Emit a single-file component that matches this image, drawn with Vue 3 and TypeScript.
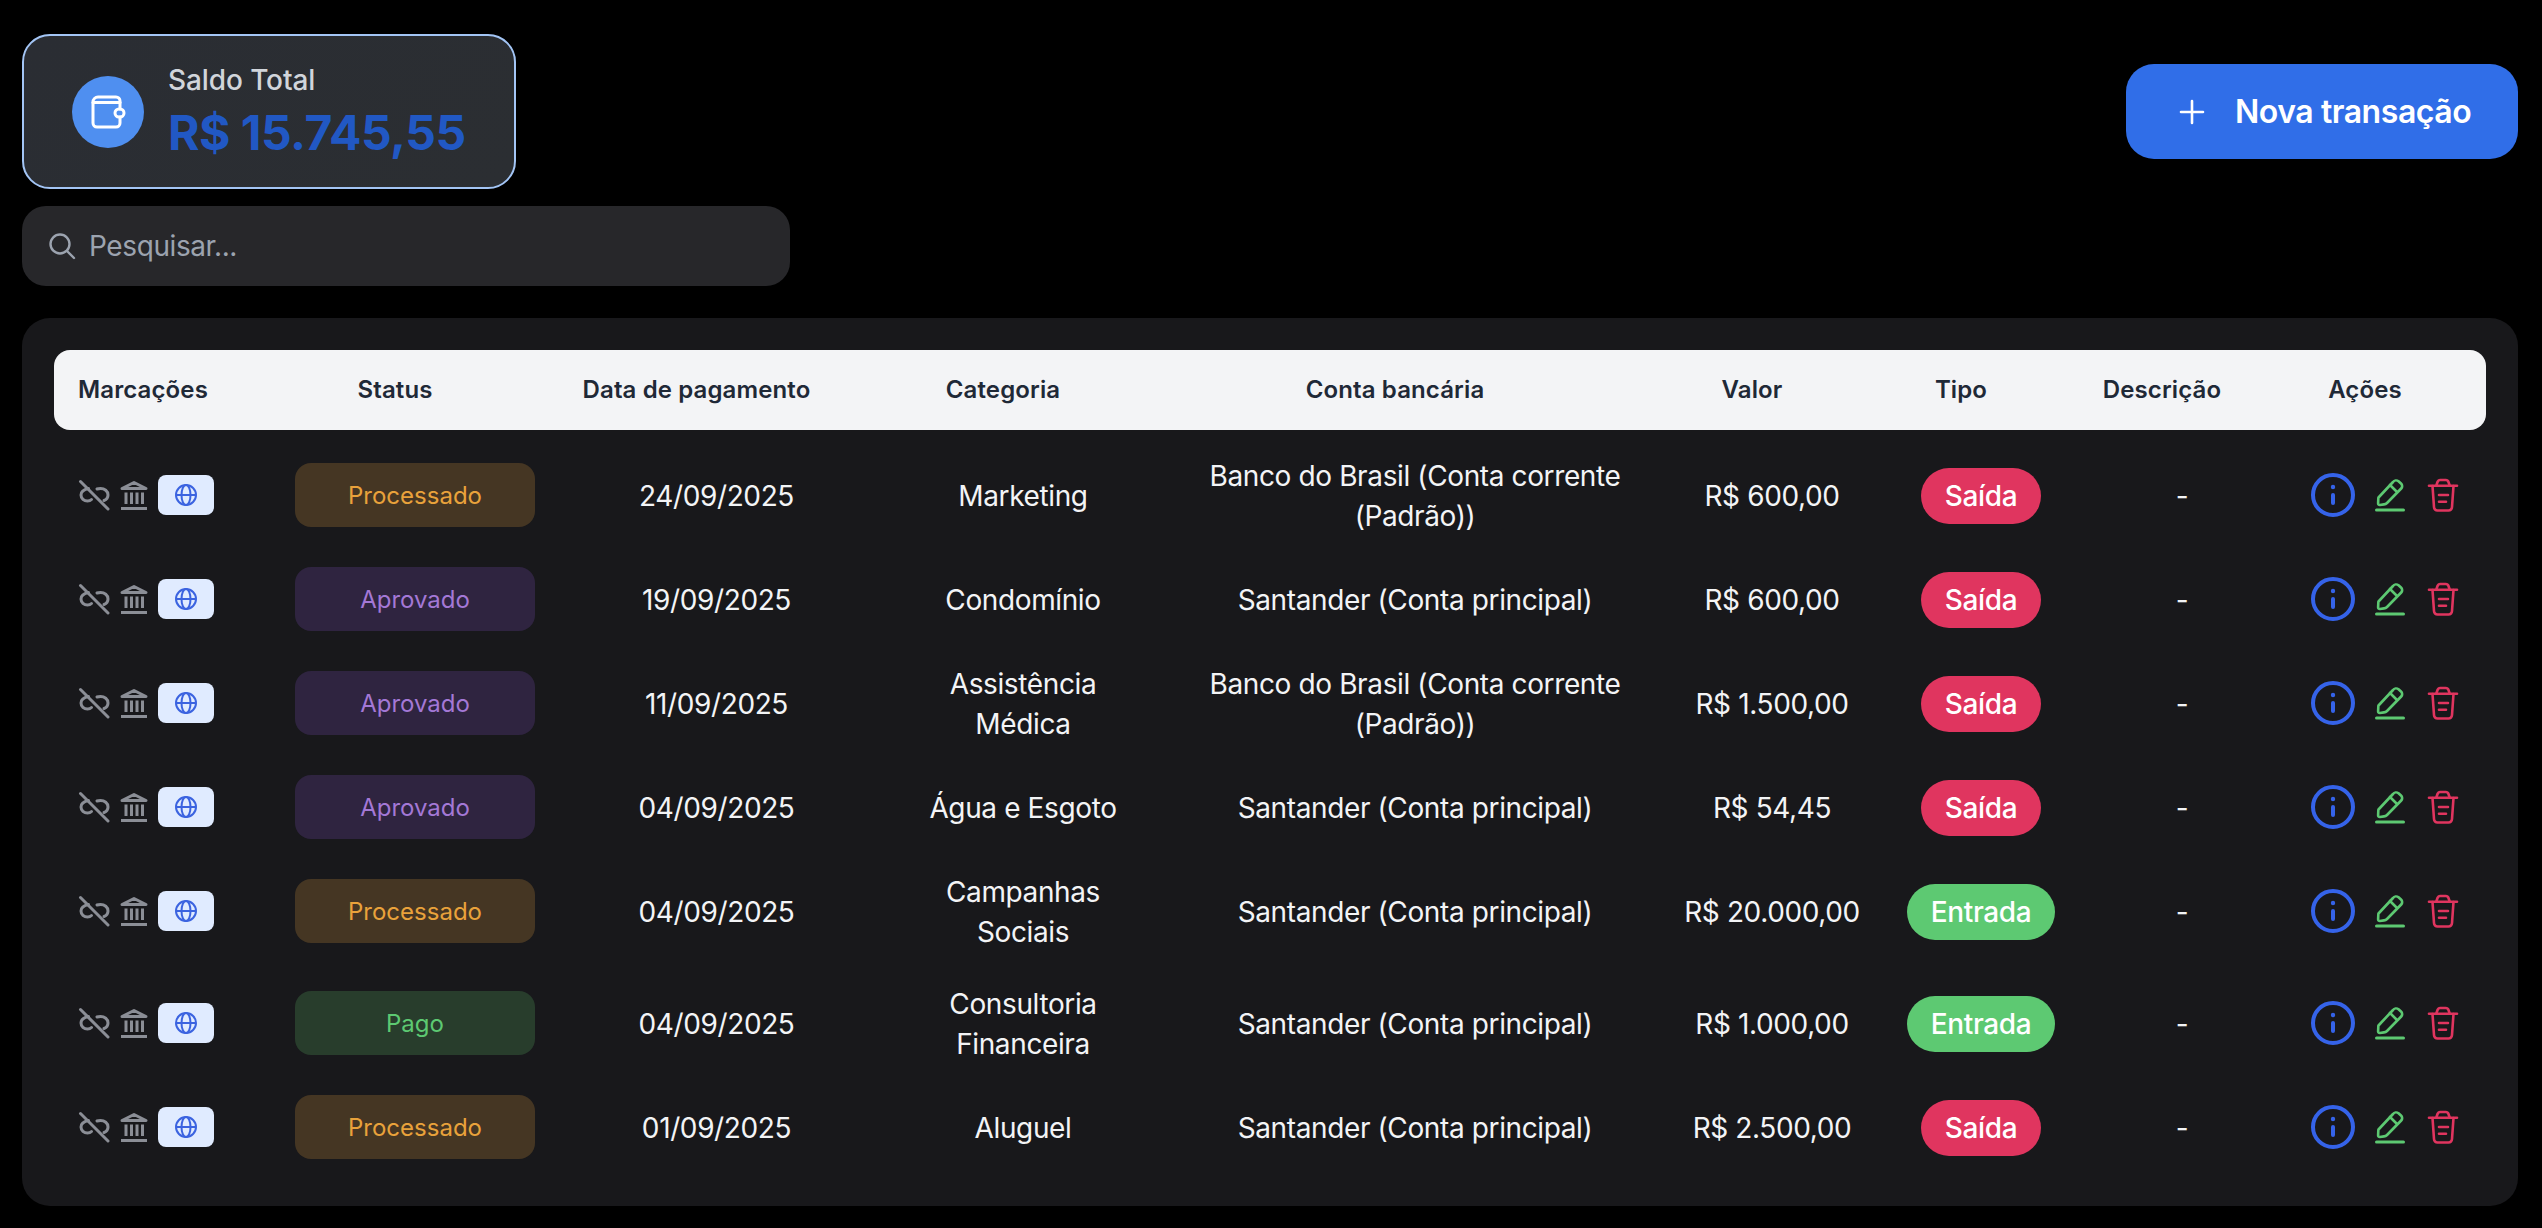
<script setup lang="ts">
interface Transaction {
  status: string
  date: string
  category: string
  account: string
  value: string
  type: string
}

const columns = ['Marcações', 'Status', 'Data de pagamento', 'Categoria', 'Conta bancária', 'Valor', 'Tipo', 'Descrição', 'Ações']
const widths = [221, 280, 323, 290, 494, 220, 198, 204, 202]

const bb = 'Banco do Brasil (Conta corrente (Padrão))'
const santander = 'Santander (Conta principal)'

const transactions: Transaction[] = [
  { status: 'Processado', date: '24/09/2025', category: 'Marketing', account: bb, value: 'R$ 600,00', type: 'Saída' },
  { status: 'Aprovado', date: '19/09/2025', category: 'Condomínio', account: santander, value: 'R$ 600,00', type: 'Saída' },
  { status: 'Aprovado', date: '11/09/2025', category: 'Assistência Médica', account: bb, value: 'R$ 1.500,00', type: 'Saída' },
  { status: 'Aprovado', date: '04/09/2025', category: 'Água e Esgoto', account: santander, value: 'R$ 54,45', type: 'Saída' },
  { status: 'Processado', date: '04/09/2025', category: 'Campanhas Sociais', account: santander, value: 'R$ 20.000,00', type: 'Entrada' },
  { status: 'Pago', date: '04/09/2025', category: 'Consultoria Financeira', account: santander, value: 'R$ 1.000,00', type: 'Entrada' },
  { status: 'Processado', date: '01/09/2025', category: 'Aluguel', account: santander, value: 'R$ 2.500,00', type: 'Saída' },
]

function statusClass(status: string) {
  return 'status-' + status.toLowerCase()
}
</script>

<template>
  <div class="page">
    <div class="top">
      <div class="balance">
        <div class="balance-icon">
          <svg width="36" height="36" viewBox="0 0 36 36" fill="none" stroke="#fff" stroke-width="3" stroke-linejoin="round" stroke-linecap="round">
            <path d="M30 15V7a4 4 0 0 0-4-4H8a5 5 0 0 0-5 5v21a4 4 0 0 0 4 4h19a4 4 0 0 0 4-4v-6" />
            <path d="M3 8.5h27" />
            <rect x="25" y="15" width="9" height="8" rx="4" />
          </svg>
        </div>
        <div class="balance-text">
          <span class="balance-label">Saldo Total</span>
          <span class="balance-value">R$ 15.745,55</span>
        </div>
      </div>
      <button class="new-btn">
        <svg width="32" height="32" viewBox="0 0 32 32" fill="none" stroke="#fff" stroke-width="2.6" stroke-linecap="round">
          <path d="M16 5v22M5 16h22" />
        </svg>
        Nova transação
      </button>
    </div>

    <div class="search">
      <svg width="28" height="28" viewBox="0 0 28 28" fill="none" stroke="#9ca3af" stroke-width="2.4" stroke-linecap="round">
        <circle cx="12" cy="12" r="9.5" />
        <path d="M19 19l7 7" />
      </svg>
      <input type="text" placeholder="Pesquisar..." />
    </div>

    <div class="panel">
      <table>
        <colgroup>
          <col v-for="w in widths" :key="w" :style="{ width: w + 'px' }" />
        </colgroup>
        <thead>
          <tr>
            <th v-for="c in columns" :key="c">{{ c }}</th>
          </tr>
        </thead>
        <tbody>
          <tr v-for="(t, i) in transactions" :key="i">
            <td class="marks-cell">
              <div class="marks">
                <svg width="32" height="32" viewBox="0 0 32 32" fill="none" stroke="#8b8e96" stroke-width="3" stroke-linecap="round">
                  <path d="M2.5 2.5l27.5 27.5" />
                  <path d="M10.5 9.5C6 10.500 3 12.500 3 16c0 3.500 3 6 6.500 6 1.500 0 3-.5 4-1.500" />
                  <path d="M19 10c1-.4 2.300-.5 3.500-.5 4 0 7.500 2.500 7.500 6.500 0 2.500-1.500 4.500-4 5.500" />
                </svg>
                <svg width="32" height="32" viewBox="0 0 32 32" fill="none" stroke="#8b8e96" stroke-width="3" stroke-linejoin="round">
                  <path d="M16 3.500L28 9.500H4z" />
                  <path d="M8 13.500V25M13.500 13.500V25M19 13.500V25M24.500 13.500V25" />
                  <path d="M3 29.500h26" />
                </svg>
                <span class="web-badge">
                  <svg width="24" height="24" viewBox="0 0 24 24" fill="none" stroke="#3b63e0" stroke-width="2">
                    <circle cx="12" cy="12" r="10" />
                    <ellipse cx="12" cy="12" rx="4.500" ry="10" />
                    <path d="M2 12h20" />
                  </svg>
                </span>
              </div>
            </td>
            <td class="status-cell">
              <span class="status" :class="statusClass(t.status)">{{ t.status }}</span>
            </td>
            <td>{{ t.date }}</td>
            <td>{{ t.category }}</td>
            <td>{{ t.account }}</td>
            <td class="value-cell">{{ t.value }}</td>
            <td>
              <span class="type" :class="t.type === 'Saída' ? 'type-out' : 'type-in'">{{ t.type }}</span>
            </td>
            <td>-</td>
            <td class="actions-cell">
              <div class="actions">
                <svg width="48" height="48" viewBox="0 0 24 24" fill="none" stroke="#3563e9" stroke-width="2" stroke-linecap="round">
                  <circle cx="12" cy="12" r="10" />
                  <path d="M12 12v4" />
                  <circle cx="12" cy="8" r="0.6" fill="#3563e9" stroke-width="1" />
                </svg>
                <svg width="36" height="36" viewBox="0 0 36 36" fill="none" stroke="#5dc972" stroke-width="2.600" stroke-linecap="round" stroke-linejoin="round">
                  <path d="M5.500 20.500L20 5a4 4 0 0 1 5.500-.8l2.500 2.300a3.500 3.500 0 0 1 .2 5L14 26a5 5 0 0 1-3 1.400l-4.200.6a1.500 1.500 0 0 1-1.700-1.600l.2-4.400a4 4 0 0 1 .2-1.500z" />
                  <path d="M17 8l7 7" />
                  <path d="M3.500 33h27" stroke-width="3" />
                </svg>
                <svg width="36" height="36" viewBox="0 0 36 36" fill="none" stroke="#e0355f" stroke-width="2.600" stroke-linecap="round" stroke-linejoin="round">
                  <path d="M4 8.700h28" />
                  <path d="M11.500 8l1-3a3 3 0 0 1 2.800-2h5.400a3 3 0 0 1 2.800 2l1 3" />
                  <path d="M7.500 9l1.500 21a3.500 3.500 0 0 0 3.500 3.500h11a3.500 3.500 0 0 0 3.500-3.500l1.500-21" />
                  <path d="M14 18h9M14 24.700h7" />
                </svg>
              </div>
            </td>
          </tr>
        </tbody>
      </table>
    </div>
  </div>
</template>

<style>
html,
body {
  background: #000;
}
</style>

<style scoped>
.page {
  padding: 34px 24px 0 22px;
  font-family: Inter, "Liberation Sans", sans-serif;
  color: #f3f4f6;
}

.top {
  display: flex;
  justify-content: space-between;
  align-items: center;
}

.balance {
  width: 494px;
  height: 155px;
  box-sizing: border-box;
  display: flex;
  align-items: center;
  gap: 24px;
  padding: 0 48px;
  border: 2px solid #a3c5f5;
  border-radius: 28px;
  background: linear-gradient(135deg, #2a2d33, #2b2e32);
}

.balance-icon {
  width: 72px;
  height: 72px;
  flex: none;
  border-radius: 50%;
  background: #4f8ff0;
  display: flex;
  align-items: center;
  justify-content: center;
}

.balance-text {
  display: flex;
  flex-direction: column;
  gap: 3px;
}

.balance-label {
  font-size: 28px;
  line-height: 40px;
  font-weight: 500;
  letter-spacing: -0.1px;
  color: #d1d5db;
}

.balance-value {
  font-size: 48px;
  line-height: 60px;
  font-weight: 700;
  letter-spacing: -0.5px;
  color: #2158c4;
  white-space: nowrap;
}

.new-btn {
  display: flex;
  align-items: center;
  gap: 27px;
  width: 392px;
  height: 95px;
  box-sizing: border-box;
  padding: 0 0 0 50px;
  border: none;
  border-radius: 28px;
  background: #306ee8;
  color: #fff;
  font-family: inherit;
  font-size: 32px;
  font-weight: 600;
  letter-spacing: -0.45px;
  white-space: nowrap;
}

.search {
  width: 768px;
  height: 80px;
  box-sizing: border-box;
  margin-top: 17px;
  display: flex;
  align-items: center;
  gap: 13px;
  padding-left: 26px;
  border-radius: 24px;
  background: #27272a;
}

.search input {
  flex: 1;
  min-width: 0;
  border: none;
  outline: none;
  padding: 0;
  background: transparent;
  color: #f3f4f6;
  font-family: inherit;
  font-size: 28px;
  letter-spacing: -0.4px;
}

.search input::placeholder {
  color: #9ca3af;
  opacity: 1;
}

.panel {
  margin-top: 32px;
  padding: 32px 32px 31px;
  border-radius: 28px;
  background: #18181b;
}

table {
  width: 2432px;
  table-layout: fixed;
  border-collapse: separate;
  border-spacing: 0;
  font-size: 28px;
  line-height: 40px;
  letter-spacing: -0.38px;
}

th {
  height: 80px;
  padding: 0 40px 0 0;
  background: #f3f4f6;
  color: #1f2937;
  font-size: 24px;
  line-height: 32px;
  font-weight: 600;
  letter-spacing: 0.12px;
  text-align: center;
  white-space: nowrap;
}

th:first-child {
  padding: 0 0 0 24px;
  text-align: left;
  border-radius: 16px 0 0 16px;
}

th:last-child {
  border-radius: 0 16px 16px 0;
}

tbody::before {
  content: "";
  display: table-row;
  height: 9px;
}

td {
  padding: 17px 24px 15px;
  text-align: center;
  color: #f3f4f6;
}

.marks-cell {
  padding: 16px 0 16px 24px;
}

.marks {
  display: flex;
  align-items: center;
  gap: 8px;
}

.web-badge {
  width: 56px;
  height: 40px;
  display: flex;
  align-items: center;
  justify-content: center;
  border-radius: 8px;
  background: #e0ebff;
}

.status-cell {
  padding: 16px 20px;
}

.status {
  display: block;
  height: 64px;
  line-height: 65px;
  border-radius: 16px;
  font-size: 24px;
  letter-spacing: 0;
}

.status-processado {
  background: #453623;
  color: #e9a23b;
}

.status-aprovado {
  background: #2f2440;
  color: #a478d6;
}

.status-pago {
  background: #283d2c;
  color: #5dc972;
}

.value-cell {
  padding: 17px 0 15px;
  white-space: nowrap;
}

.type {
  display: inline-block;
  height: 56px;
  line-height: 56px;
  padding: 0 24px;
  border-radius: 28px;
  font-weight: 500;
  color: #fff;
  vertical-align: middle;
}

.type-out {
  background: #e0355f;
}

.type-in {
  background: #5dc972;
}

.actions-cell {
  padding: 0;
}

.actions {
  display: flex;
  align-items: center;
  justify-content: center;
  gap: 16px;
}
</style>
